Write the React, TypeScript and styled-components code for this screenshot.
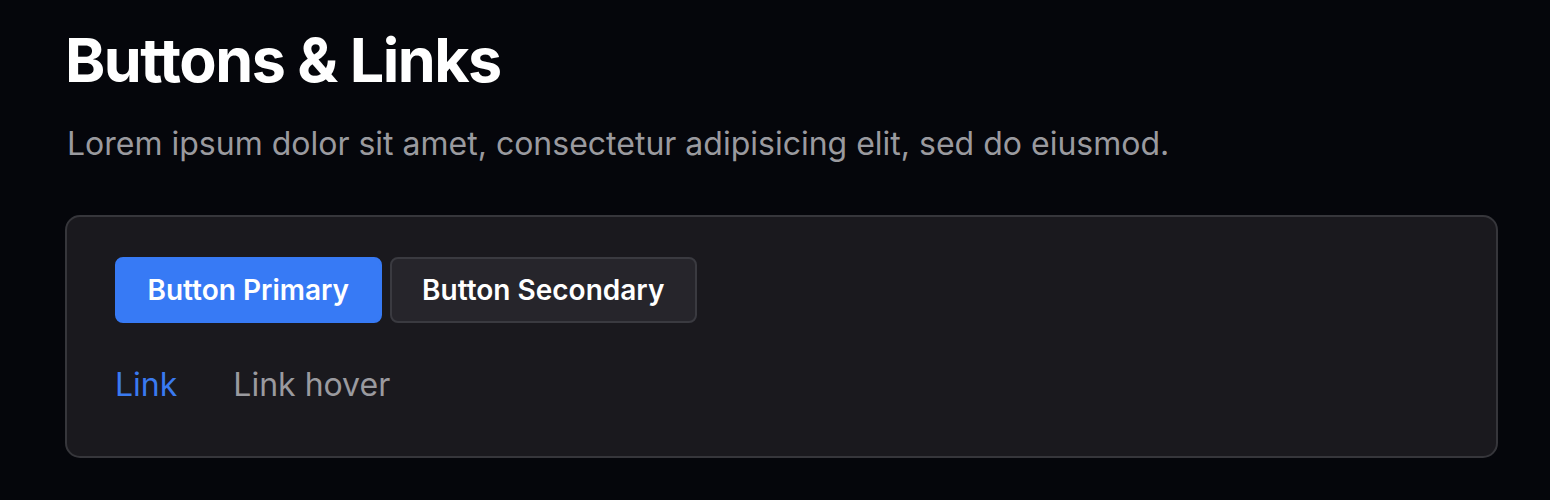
import React from "react"
import styled, { createGlobalStyle } from "styled-components"

const GlobalStyle = createGlobalStyle`
  html, body {
    margin: 0;
    background: #05060b;
  }
  body {
    font-family: Inter, "Noto Sans", sans-serif;
    -webkit-font-smoothing: antialiased;
  }
`

const Page = styled.main`
  padding: 30px 52px 40px 65px;
`

const Title = styled.h1`
  margin: 0;
  font-size: 61px;
  line-height: 1;
  font-weight: 700;
  letter-spacing: -1.5px;
  color: #ffffff;
`

const Lead = styled.p`
  margin: 37px 0 0 2px;
  font-size: 32px;
  line-height: 1;
  font-weight: 400;
  color: #9a9a9f;
`

const Card = styled.section`
  margin-top: 55px;
  padding: 40px 48px 55px;
  background: #1a191e;
  border: 2px solid #36363b;
  border-radius: 15px;
`

const ButtonRow = styled.div`
  display: flex;
  gap: 8px;
`

const Button = styled.button<{ $variant: "primary" | "secondary" }>`
  height: 66px;
  padding: 0 30.5px;
  border-radius: 8px;
  font-family: inherit;
  font-size: 28px;
  font-weight: 600;
  color: #ffffff;
  cursor: pointer;
  background: ${p => (p.$variant === "primary" ? "#377af5" : "#26252b")};
  border: 2px solid
    ${p => (p.$variant === "primary" ? "#377af5" : "#3a3a40")};
`

const LinkRow = styled.div`
  display: flex;
  gap: 56px;
  margin-top: 46px;
`

const TextLink = styled.a<{ $hover?: boolean }>`
  font-size: 32px;
  line-height: 1;
  text-decoration: none;
  color: ${p => (p.$hover ? "#9a9a9f" : "#3a7af0")};
  cursor: pointer;
`

const App: React.FunctionComponent = () => {
  return (
    <>
      <GlobalStyle />
      <Page>
        <Title>Buttons &amp; Links</Title>
        <Lead>
          Lorem ipsum dolor sit amet, consectetur adipisicing elit, sed do
          eiusmod.
        </Lead>

        <Card>
          <ButtonRow>
            <Button $variant="primary">Button Primary</Button>
            <Button $variant="secondary">Button Secondary</Button>
          </ButtonRow>

          <LinkRow>
            <TextLink href="#">Link</TextLink>
            <TextLink href="#" $hover>
              Link hover
            </TextLink>
          </LinkRow>
        </Card>
      </Page>
    </>
  )
}

export default App
